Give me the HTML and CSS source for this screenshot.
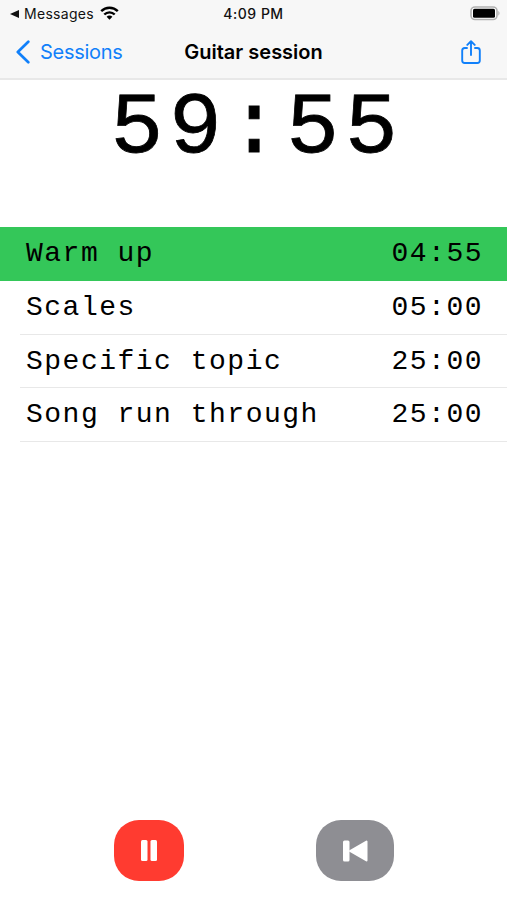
FILE: index.html
```
<!DOCTYPE html>
<html lang="en">
<head>
    <meta charset="UTF-8">
    <meta name="viewport" content="width=device-width, initial-scale=1.0">
    <title>Guitar session</title>
    <link rel="stylesheet" href="styles.css">
</head>
<body>
    <header class="top">
        <div class="status-bar">
            <div class="status-left">
                <svg width="9" height="8" viewBox="0 0 9 8"><path d="M0 4L9 0v8z" fill="#111"/></svg>
                <span class="back-app">Messages</span>
                <svg class="wifi" width="19" height="14" viewBox="0 0 19 14" fill="none" stroke="#000" stroke-width="2.4">
                    <path d="M1.2 5.2c4.6-4.6 12-4.6 16.6 0M4.3 8.5c2.9-2.9 7.5-2.9 10.4 0"/>
                    <path d="M9.5 13.7L6.6 10.8c1.6-1.6 4.2-1.6 5.8 0z" fill="#000" stroke="none"/>
                </svg>
            </div>
            <span class="status-time">4:09 PM</span>
            <div class="status-right">
                <svg width="31" height="15" viewBox="0 0 31 15">
                    <rect x="1" y="1" width="26" height="12.5" rx="4" fill="#fff" stroke="#b0b0b0" stroke-width="1.6"/>
                    <rect x="3" y="2.8" width="22" height="9" rx="1.5" fill="#000"/>
                    <path d="M28.3 4.8q2.5 2.5 0 5z" fill="#b0b0b0"/>
                </svg>
            </div>
        </div>
        <nav class="nav-bar">
            <a href="#" class="back-link">
                <svg width="14" height="24" viewBox="0 0 14 24"><path d="M12.3 1.7L1.8 12l10.5 10.3" fill="none" stroke="#1180fa" stroke-width="2.7" stroke-linecap="round" stroke-linejoin="round"/></svg>
                <span>Sessions</span>
            </a>
            <h1>Guitar session</h1>
            <a href="#" class="share-link" aria-label="Share">
                <svg width="20" height="25" viewBox="0 0 20 25" fill="none" stroke="#1180fa" stroke-width="1.9" stroke-linecap="round" stroke-linejoin="round">
                    <path d="M6 8H3.7Q1.2 8 1.2 10.5V20.5Q1.2 23 3.7 23H16.3Q18.8 23 18.8 20.5V10.5Q18.8 8 16.3 8H14"/>
                    <path d="M10 15V1.5M6.3 4.9L10 1.3l3.7 3.6"/>
                </svg>
            </a>
        </nav>
    </header>

    <main>
        <div class="timer">59:55</div>

        <ul class="steps">
            <li class="active"><span>Warm up</span><span>04:55</span></li>
            <li><span>Scales</span><span>05:00</span></li>
            <li><span>Specific topic</span><span>25:00</span></li>
            <li><span>Song run through</span><span>25:00</span></li>
        </ul>
    </main>

    <footer class="controls">
        <button class="pause" aria-label="Pause">
            <svg width="16" height="21" viewBox="0 0 16 21" fill="#fff"><rect width="6.5" height="21" rx="1.5"/><rect x="9.5" width="6.5" height="21" rx="1.5"/></svg>
        </button>
        <button class="restart" aria-label="Restart">
            <svg width="25" height="22" viewBox="0 0 25 22" fill="#fff"><rect y=".5" width="6.5" height="21" rx="1.5"/><path d="M7 11L23.5 1.5v19z" stroke="#fff" stroke-width="2" stroke-linejoin="round"/></svg>
        </button>
    </footer>
</body>
</html>
```
FILE: styles.css
```
* {
    box-sizing: border-box;
}

body {
    margin: 0;
    height: 100vh;
    display: flex;
    flex-direction: column;
    font-family: Inter, "Liberation Sans", sans-serif;
    background: #fff;
    color: #000;
    overflow: hidden;
}

svg {
    display: block;
}

.top {
    height: 80px;
    background: #f7f7f7;
    border-bottom: 2px solid #e8e8e8;
}

.status-bar,
.nav-bar {
    display: grid;
    grid-template-columns: 1fr auto 1fr;
    align-items: center;
}

.status-bar {
    height: 27px;
    padding: 0 6px 0 10px;
    font-size: 14px;
    color: #111;
}

.status-left {
    display: flex;
    align-items: center;
}

.back-app {
    margin: 0 6px 0 5px;
    font-size: 14px;
    letter-spacing: 0.3px;
}

.wifi {
    margin-top: -2px;
}

.status-time {
    margin-right: 4px;
    font-weight: 500;
    letter-spacing: 0.5px;
}

.status-right {
    justify-self: end;
}

/* Navigation */
.nav-bar {
    height: 50px;
    padding: 0 16px;
}

.back-link {
    display: flex;
    align-items: center;
    gap: 10px;
    color: #1180fa;
    font-size: 20px;
    letter-spacing: -0.3px;
    text-decoration: none;
}

h1 {
    margin: 0;
    font-size: 20px;
    font-weight: 600;
}

.share-link {
    justify-self: end;
    margin-right: 10px;
}

/* Total time left */
.timer {
    height: 147px;
    padding-left: 7px;
    font-family: "Liberation Mono", monospace;
    font-size: 88px;
    line-height: 97px;
    letter-spacing: 5.8px;
    text-align: center;
    -webkit-text-stroke: 0.8px #000;
}

/* Session steps */
.steps {
    list-style: none;
    margin: 0;
    padding: 0 0 0 20px;
    font-family: "Liberation Mono", monospace;
    font-size: 28px;
    letter-spacing: 1.5px;
}

.steps li {
    display: flex;
    justify-content: space-between;
    height: 53.8px;
    padding: 0 24px 0 6px;
    line-height: 53px;
    border-bottom: 1px solid #e8e8e8;
}

.steps .active {
    margin-left: -20px;
    padding-left: 26px;
    background: #34c759;
    border-bottom: none;
}

/* Buttons */
.controls {
    display: flex;
    gap: 132px;
    margin-top: auto;
    padding: 0 0 19px 114px;
}

button {
    display: flex;
    align-items: center;
    justify-content: center;
    height: 61px;
    padding: 0;
    border: none;
    border-radius: 25px;
    cursor: pointer;
}

.pause {
    width: 70px;
    background: #ff3b30;
}

.restart {
    width: 78px;
    background: #8e8e93;
}
```
